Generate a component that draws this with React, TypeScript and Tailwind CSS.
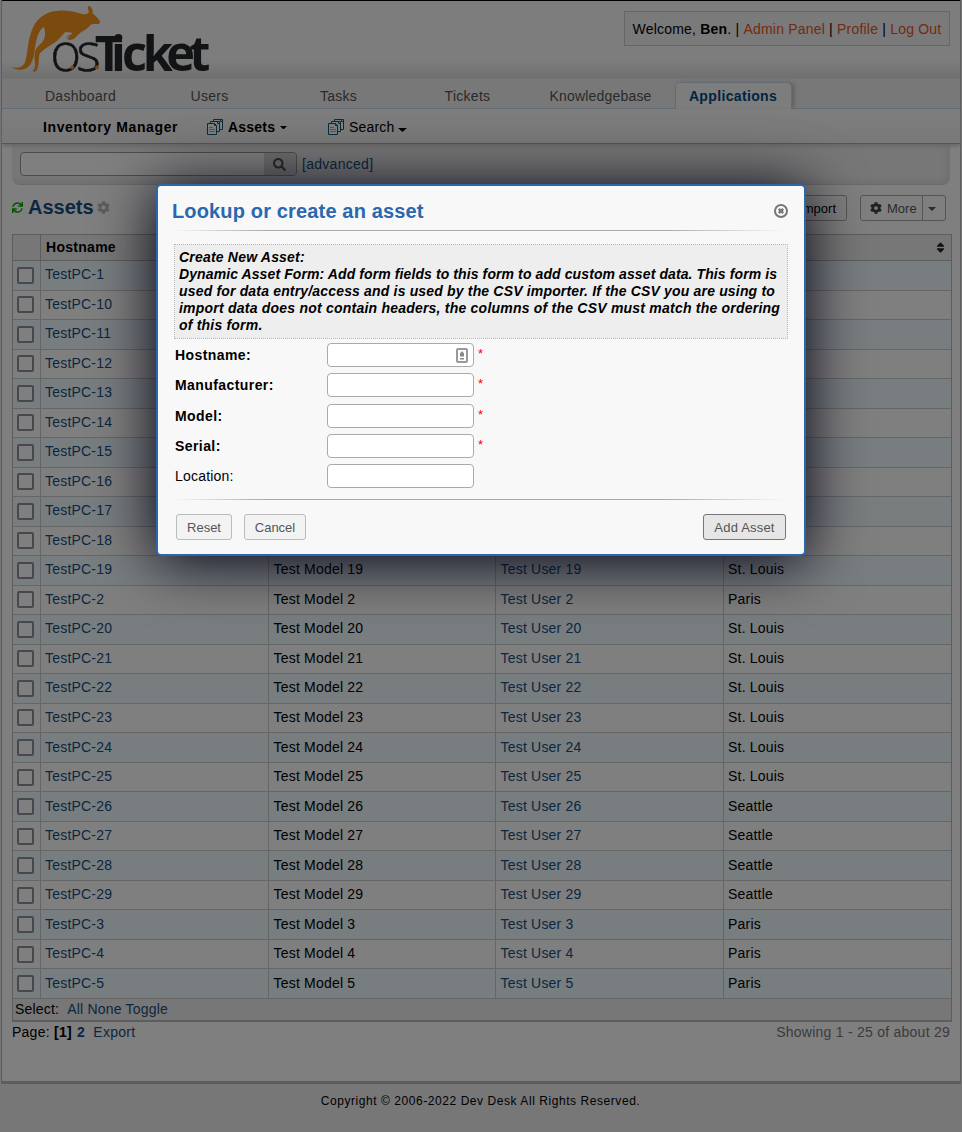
import React from "react";
import { FaSearch, FaCog, FaSync, FaSort } from "react-icons/fa";

const cities: [string, string][] = [
  ["1", "Paris"], ["10", "Paris"], ["11", "Paris"], ["12", "Paris"], ["13", "Paris"],
  ["14", "St. Louis"], ["15", "St. Louis"], ["16", "St. Louis"], ["17", "St. Louis"], ["18", "St. Louis"],
  ["19", "St. Louis"], ["2", "Paris"], ["20", "St. Louis"], ["21", "St. Louis"], ["22", "St. Louis"],
  ["23", "St. Louis"], ["24", "St. Louis"], ["25", "St. Louis"], ["26", "Seattle"], ["27", "Seattle"],
  ["28", "Seattle"], ["29", "Seattle"], ["3", "Paris"], ["4", "Paris"], ["5", "Paris"],
];

function Logo() {
  return (
    <svg className="block h-[72px] w-[204px] overflow-visible" viewBox="30 12 612 216">
      <path
        fill="#f7941d"
        d="M33 202C54 206 70 203 76 184C83 160 82 130 93 98C105 58 134 34 176 32C203 30 226 36 246 42C256 45 264 41 267 35C263 28 262 20 266 18C269 17 272 20 274 24C278 29 279 34 278 41C287 45 292 54 299 62C302 68 299 72 294 72C284 73 277 71 271 75C265 82 260 88 248 94C239 99 233 106 227 112C221 119 214 121 203 120L207 116L197 114L210 110L197 108C209 106 215 104 217 98L196 96C185 106 178 120 162 129C149 138 130 148 120 160C114 171 119 186 114 198C113 205 111 215 104 215L97 214C102 208 106 204 105 193C104 175 101 158 109 146C117 133 131 127 134 112C136 102 136 92 131 80C118 91 112 106 108 126C103 151 104 173 92 192C80 212 52 214 33 202Z"
      />
      <text x="151 229" y="212" fontFamily="Open Sans, sans-serif" fontWeight="300" fontSize="158" fill="#222628" stroke="#222628" strokeWidth="1.500">os</text>
      <text x="284 333 366 428 499 568" y="212" fontFamily="Open Sans, sans-serif" fontWeight="700" fontSize="146" fill="#222628">Ticket</text>
      <path d="M209 203l8-8 7 7-8 7zM283 203l8-8 8 8-8 6z" fill="#f7941d" />
    </svg>
  );
}

function Copies() {
  return (
    <svg className="h-4 w-4 shrink-0" viewBox="0 0 16 16" fill="#fff" stroke="#0b5a78" strokeWidth="1">
      <path d="M6.500.5h9v10h-9z" />
      <path d="M3.500 2.500h9v10h-9z" />
      <path d="M.5 4.500h7l2 2v9h-9z" />
      <path d="M7.500 4.500v2h2M10.500 2.500v2h2M13.500.5v2h2" fill="none" />
      <path d="M2 8.500h4M2 10.500h6M2 12.500h6" stroke="#aaa" />
    </svg>
  );
}

function Caret({ className }: { className: string }) {
  return (
    <svg className={className} viewBox="0 0 8 4" preserveAspectRatio="none" fill="currentColor">
      <path d="M0 0h8L4 4z" />
    </svg>
  );
}

const tabs = ["Dashboard", "Users", "Tasks", "Tickets"];

function Field({ label, bold = true, icon = false }: { label: string; bold?: boolean; icon?: boolean }) {
  return (
    <div className="flex h-[30.25px] items-start">
      <div className={"w-[152px] pt-1 leading-4 " + (bold ? "font-bold tracking-[0.42px]" : "")}>{label}</div>
      <div className="flex h-6 w-[147px] items-center justify-end rounded border border-[#aaa] bg-white pr-[5px]">
        {icon && (
          <svg className="h-[15px] w-3" viewBox="0 0 12 15">
            <rect x="1" y="1" width="10" height="13" rx="1" fill="#fff" stroke="#999" strokeWidth="2" />
            <path d="M6 3l2 2.500v3H4v-3zM4 10h4v1.500H4z" fill="#888" />
          </svg>
        )}
      </div>
      {bold && <span className="pt-[3px] pl-1 text-[13px] leading-4 text-[#f00]">*</span>}
    </div>
  );
}

export default function App() {
  return (
    <div
      className="relative h-[1132px] w-[962px] overflow-hidden bg-[#eee] text-[14px] leading-4 tracking-[0.2px] whitespace-nowrap text-black"
      style={{ fontFamily: '"Liberation Sans", Arial, sans-serif' }}
    >
      <div className="ml-px flex h-[1084px] w-[960px] flex-col border-x border-b-3 border-[#bbb] bg-white">
        <div className="flex h-[78px] shrink-0 items-start justify-between border-t border-black bg-[linear-gradient(#fbfbfb_76%,#e0e0e0)] pr-[10px] pl-2">
          <div className="pt-[3px]"><Logo /></div>
          <div className="mt-[10px] flex h-[35px] w-[326px] items-center justify-center border border-[#ccc] bg-[#f5f5f5] text-[#e65524]">
            <span className="text-black">Welcome, <b>Ben</b>. |&nbsp;</span>Admin Panel<span className="text-black">&nbsp;|&nbsp;</span>Profile<span className="text-black">&nbsp;|&nbsp;</span>Log Out
          </div>
        </div>
        <div className="flex h-[31px] shrink-0 items-end border-t border-b border-t-[#e8e8e8] border-b-[#c5d9ec] bg-[#f0f0f0] pl-[14px] text-[#555]">
          {tabs.map((t) => (
            <div key={t} className="w-[129px] pb-1 text-center tracking-[0.28px]">{t}</div>
          ))}
          <div className="w-[137px] pb-1 text-center">Knowledgebase</div>
          <div className="ml-[6px] -mb-px h-[27px] w-[117px] rounded-t-[5px] border border-b-0 border-[#c5d9ec] bg-[#fbfbfb] pt-[5px] pr-px text-center font-bold tracking-[0.35px] text-[#004a80] shadow-[3px_0_4px_-1px_#bbb]">Applications</div>
        </div>
        <div className="z-0 flex h-[35px] shrink-0 items-center border-b border-[#aaa] bg-[linear-gradient(#fbfbfb,#f2f2f2)] pt-[2px] pl-[41px] shadow-[0_2px_4px_#ccc]">
          <b className="w-[164px] tracking-[0.63px]">Inventory Manager</b>
          <div className="flex w-[121px] items-center gap-[5px]"><Copies /><b>Assets</b><Caret className="mt-px h-[3.500px] w-[7px]" /></div>
          <div className="flex items-center gap-[5px]"><Copies /><span>Search</span><Caret className="mt-[5px] -ml-[2px] h-1 w-[9px]" /></div>
        </div>
        <div className="mr-[10px] ml-[10px] flex h-[41px] shrink-0 items-start rounded-b-lg border-b border-dotted border-[#bbb] bg-[#eee] pt-2 pl-2 shadow-[inset_-3px_-3px_6px_#e0e0e0]">
          <div className="flex h-6 w-[277px] justify-end rounded border border-[#999] bg-white">
            <div className="flex w-8 items-center justify-center rounded-r bg-[#dadada] pr-[2px] text-[#555]"><FaSearch size={13} /></div>
          </div>
          <span className="pt-1 pl-[5px] tracking-[0.28px] text-[#184e81]">[advanced]</span>
        </div>
        <div className="flex h-[49px] shrink-0 items-center justify-between pr-[14px] pb-[3px] pl-[10px]">
          <div className="flex items-center">
            <FaSync size={11} className="-mt-px mr-[5px] text-[#0a0]" />
            <span className="-mt-[2px] text-[20px] leading-6 font-bold tracking-[0px] text-[#184e81]">Assets</span>
            <FaCog size={13} className="-mt-px ml-[3px] text-[#bbb]" />
          </div>
          <div className="flex gap-[13px] text-[13px] tracking-[0px]">
            <div className="flex h-[26px] w-[90px] items-center justify-end rounded-[3px] border border-[#aaa] pt-px pr-[10px] text-black">Import</div>
            <div className="flex h-[26px] w-[86px] items-center rounded-[3px] border border-[#aaa] text-[#555]">
              <FaCog size={12} className="ml-[9px] text-[#444]" />
              <span className="ml-[5px] w-[35px] pt-px">More</span>
              <div className="flex h-full flex-1 items-center justify-center border-l border-[#aaa] pr-1"><Caret className="mt-[2px] h-1 w-2" /></div>
            </div>
          </div>
        </div>
        <div className="ml-[10px] flex w-[940px] shrink-0 flex-col border border-[#bbb] text-[#184e81]">
          <div className="flex h-[26px] border-b border-[#bbb] bg-[#eee] font-bold tracking-[0.28px] text-black">
            <div className="w-[28px] border-r border-[#bbb]" />
            <div className="flex-1 pt-[4px] pl-[5px]">Hostname</div>
            <FaSort size={13} className="mt-[6px] mr-[4px] text-[#222]" />
          </div>
          {cities.map(([n, city], i) => (
            <div key={n} className={"flex h-[29.52px] items-center border-b border-[#ccc] " + (i % 2 === 0 ? "bg-[#f0faff]" : "bg-white")}>
              <div className="flex h-full w-[28px] items-center justify-center border-r border-[#ccc]">
                <div className="mr-[3px] ml-[1px] h-[17px] w-[17px] rounded-[2px] border-2 border-[#8f8f9d] bg-white" />
              </div>
              <div className="flex h-full w-[228px] items-center border-r border-[#ccc] pb-[2px] pl-1">TestPC-{n}</div>
              <div className="flex h-full w-[227px] items-center border-r border-[#ccc] pb-[2px] pl-[4.500px] text-black">Test Model {n}</div>
              <div className="flex h-full w-[228px] items-center border-r border-[#ccc] pb-[2px] pl-[4.500px]">Test User {n}</div>
              <div className="pb-[2px] pl-1 text-black">{city}</div>
            </div>
          ))}
          <div className="flex h-[22px] items-center gap-2 border-b border-[#bbb] bg-[#eee] pl-[2px]">
            <span className="text-black">Select:</span><span>All None Toggle</span>
          </div>
        </div>
        <div className="flex justify-between pt-[2px] pr-[10px] pl-[10px] tracking-[0.25px] text-[#777]">
          <span className="text-[#184e81]"><span className="text-black">Page: <b>[1]</b></span> <b className="ml-px">2</b>&nbsp; Export</span>
          <span>Showing 1 - 25 of about 29</span>
        </div>
      </div>
      <div className="pt-[9px] pr-px text-center text-[12px] tracking-[0.56px]">Copyright © 2006-2022 Dev Desk All Rights Reserved.</div>

      <div className="absolute inset-0 bg-black/50" />
      <div className="absolute top-[184px] left-[156px] flex h-[372px] w-[650px] flex-col rounded-[5px] border-2 border-[#2a67ac] bg-[#f8f8f8] pr-[17px] pl-4 shadow-[0_5px_60px_#001]">
        <div className="-ml-[2px] flex h-[44px] shrink-0 items-center justify-between pt-[6px]">
          <h3 className="text-[20px] leading-6 font-bold tracking-[0.15px] text-[#2a67ac]">Lookup or create an asset</h3>
          <svg className="-mr-px mb-px h-[14px] w-[14px]" viewBox="0 0 14 14" fill="none" stroke="#777">
            <circle cx="7" cy="7" r="6" strokeWidth="2" />
            <path d="M4.800 4.800l4.400 4.400M9.200 4.800l-4.400 4.400" strokeWidth="2.400" />
          </svg>
        </div>
        <div className="h-px shrink-0 bg-[linear-gradient(to_right,transparent,#aaa_15%,#aaa_80%,transparent)]" />
        <div className="mt-[13px] h-[95px] w-[614px] shrink-0 border border-dotted border-[#bbb] bg-[#eee] pt-1 pl-1 leading-[17px] font-bold italic">
          <p className="tracking-[0.2px]">Create New Asset:</p>
          <p className="tracking-[0.1px]">Dynamic Asset Form: Add form fields to this form to add custom asset data. This form is</p>
          <p className="tracking-[0.17px]">used for data entry/access and is used by the CSV importer. If the CSV you are using to</p>
          <p className="tracking-[0.22px]">import data does not contain headers, the columns of the CSV must match the ordering</p>
          <p className="tracking-[0.2px]">of this form.</p>
        </div>
        <div className="flex flex-col pt-1 pl-px">
          <Field label="Hostname:" icon />
          <Field label="Manufacturer:" />
          <Field label="Model:" />
          <Field label="Serial:" />
          <Field label="Location:" bold={false} />
        </div>
        <div className="mt-[5px] h-px shrink-0 bg-[linear-gradient(to_right,transparent,#aaa_15%,#aaa_80%,transparent)]" />
        <div className="mt-[14px] flex pl-[2px] text-[13px] text-[#555]">
          <button className="h-[26px] w-14 rounded-[3px] border border-[#bbb] bg-[#f3f3f3] pt-px tracking-[0px]">Reset</button>
          <button className="ml-3 h-[26px] w-[62px] rounded-[3px] border border-[#bbb] bg-[#f3f3f3] pt-px tracking-[0px]">Cancel</button>
          <button className="mr-px ml-auto h-[26px] w-[83px] rounded-[3px] border border-[#777] bg-[#e6e6e6] pt-px">Add Asset</button>
        </div>
      </div>
    </div>
  );
}
